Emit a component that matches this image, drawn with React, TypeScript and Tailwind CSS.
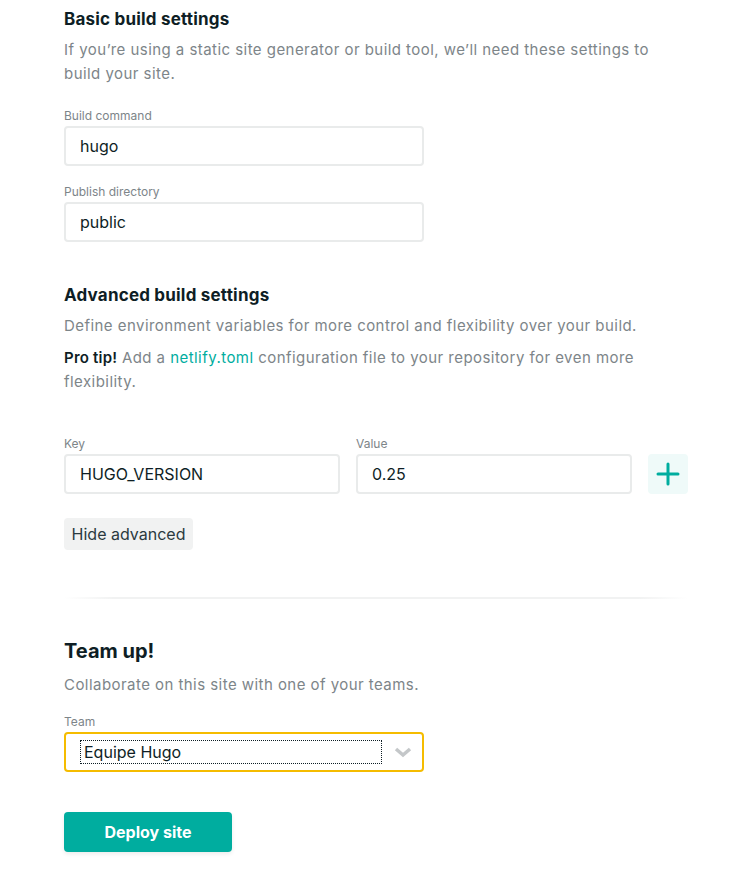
import React from "react";

const font = { fontFamily: "Inter, 'Noto Sans', sans-serif" };

function Label({ children }: { children: React.ReactNode }) {
  return <div className="text-[12px] leading-[16px] text-[#7d8589]">{children}</div>;
}

function Input({ value, className = "" }: { value: string; className?: string }) {
  return (
    <div
      className={`mt-[2px] flex h-[40px] items-center rounded-[4px] border-2 border-[#e9ebeb] bg-white pl-[14px] text-[16px] text-[#0e1e25] ${className}`}
    >
      {value}
    </div>
  );
}

export default function App() {
  return (
    <div className="min-h-[894px] w-[745px] bg-white pl-[64px] pt-[7px]" style={font}>
      <h2 className="text-[17px] font-bold leading-[24px] tracking-[0.2px] text-[#0e1e25]">Basic build settings</h2>
      <p className="mt-[7px] w-[610px] text-[15px] leading-[24px] tracking-[0.45px] text-[#7d8589]">
        If you’re using a static site generator or build tool, we’ll need these settings to build your site.
      </p>

      <div className="mt-[22px] w-[360px]">
        <Label>Build command</Label>
        <Input value="hugo" />
      </div>
      <div className="mt-[18px] w-[360px]">
        <Label>Publish directory</Label>
        <Input value="public" />
      </div>

      <h2 className="mt-[41px] text-[17px] font-bold leading-[24px] tracking-[0.2px] text-[#0e1e25]">
        Advanced build settings
      </h2>
      <p className="mt-[7px] text-[15px] leading-[24px] tracking-[0.45px] text-[#7d8589]">
        Define environment variables for more control and flexibility over your build.
      </p>
      <p className="mt-[8px] w-[610px] text-[15px] leading-[24px] tracking-[0.45px] text-[#7d8589]">
        <span className="font-semibold tracking-[0.2px] text-[#0e1e25]">Pro tip!</span> Add a{" "}
        <span className="text-[#00ad9f]">netlify.toml</span> configuration file to your repository for even more
        flexibility.
      </p>

      <div className="mt-[42px] flex items-end gap-[16px]">
        <div className="w-[276px]">
          <Label>Key</Label>
          <Input value="HUGO_VERSION" />
        </div>
        <div className="w-[276px]">
          <Label>Value</Label>
          <Input value="0.25" />
        </div>
        <button className="flex h-[40px] w-[40px] items-center justify-center rounded-[4px] bg-[#effaf9]">
          <svg width="24" height="24" viewBox="0 0 24 24">
            <path d="M12 2v20M2 12h20" stroke="#00ad9f" strokeWidth="3" strokeLinecap="round" />
          </svg>
        </button>
      </div>

      <button className="mt-[24px] flex h-[32px] w-[129px] items-center justify-center rounded-[4px] bg-[#f1f2f2] text-[16px] text-[#2b3a40]">
        Hide advanced
      </button>

      <div className="mt-[47px] h-[2px] w-[624px] bg-[linear-gradient(to_right,transparent,#f1f2f2_8%,#f1f2f2_92%,transparent)]" />

      <h2 className="mt-[38px] text-[20px] font-bold leading-[28px] text-[#0e1e25]">Team up!</h2>
      <p className="mt-[8px] text-[15px] leading-[24px] tracking-[0.45px] text-[#7d8589]">
        Collaborate on this site with one of your teams.
      </p>

      <div className="mt-[17px] w-[360px]">
        <Label>Team</Label>
        <div className="mt-[2px] flex h-[40px] items-center rounded-[4px] border-2 border-[#f5bc00] bg-white pl-[14px] pr-[10px]">
          <div className="flex h-[24px] w-[302px] items-center border border-dotted border-[#0e1e25] pl-[3px] text-[16px] text-[#0e1e25]">
            Equipe Hugo
          </div>
          <svg className="ml-auto" width="18" height="12" viewBox="0 0 18 12">
            <path d="M2 3l7 6 7-6" stroke="#c4c7c9" strokeWidth="3.5" fill="none" strokeLinejoin="miter" />
          </svg>
        </div>
      </div>

      <button className="mt-[40px] flex h-[40px] w-[168px] items-center justify-center rounded-[4px] bg-[#00ad9f] text-[16px] font-bold text-white shadow-[0_2px_4px_rgba(0,0,0,0.08)]">
        Deploy site
      </button>
    </div>
  );
}
